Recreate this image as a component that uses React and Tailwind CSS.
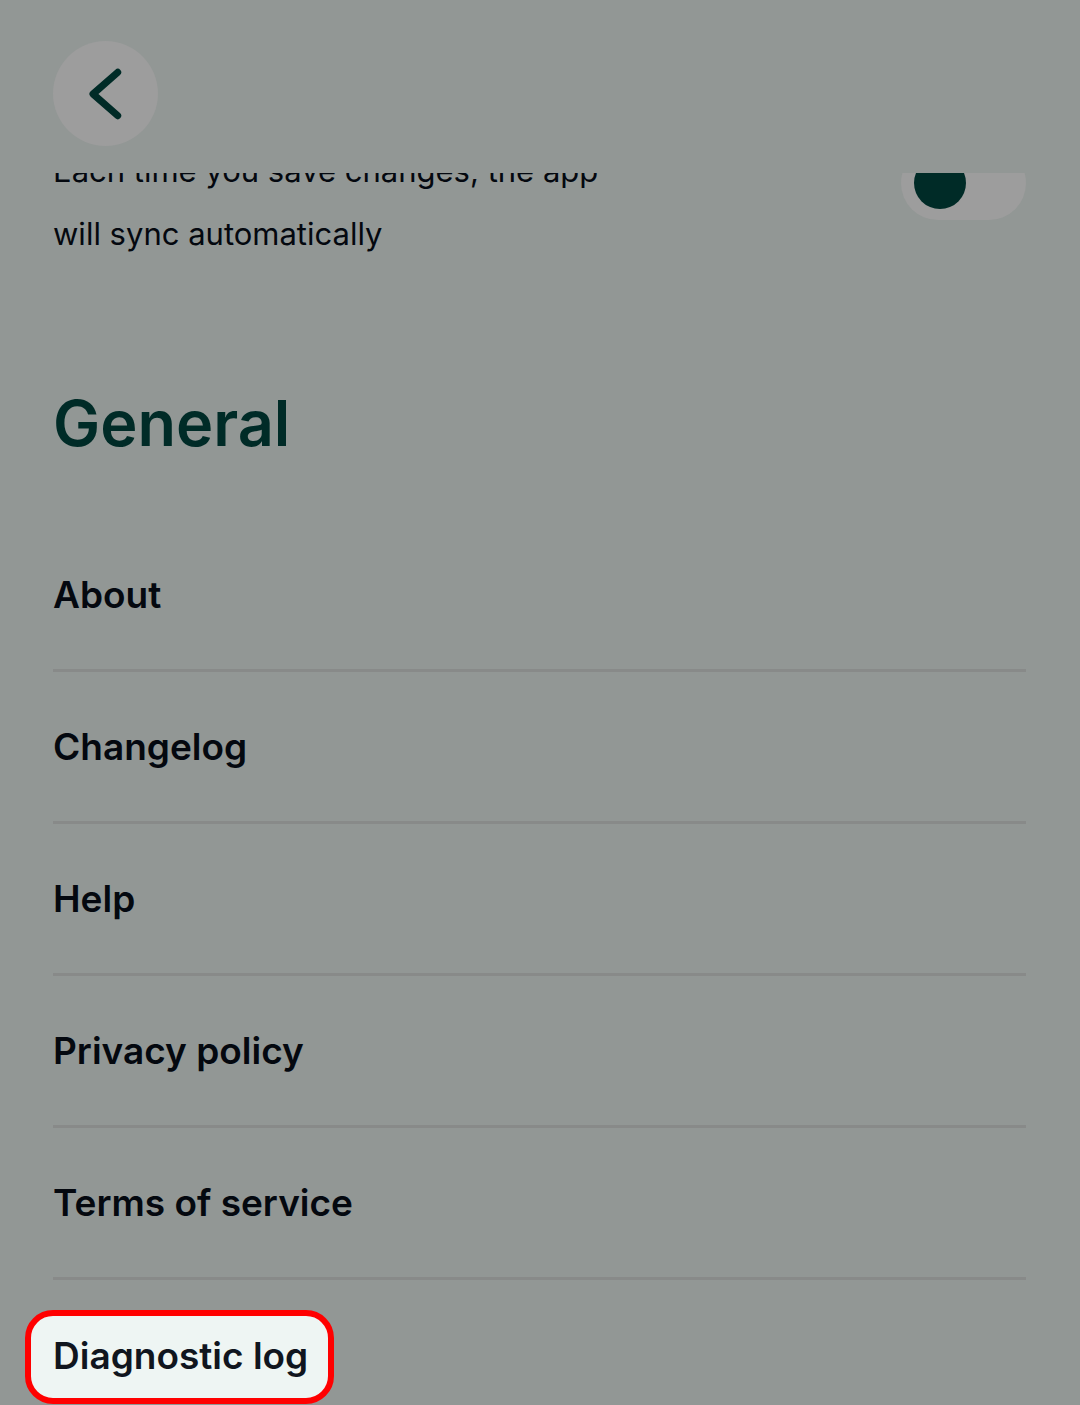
import React from 'react'

const links = ["About", "Changelog", "Help", "Privacy policy", "Terms of service"]

const BackButton = () => {
    return (
        <button type="button" aria-label="Back" className="flex items-center justify-center w-[105px] h-[105px] rounded-full bg-[#9d9d9d] text-[#002b27]">
            <svg aria-hidden="true" className="w-[105px] h-[105px]" fill="none" stroke="currentColor" strokeWidth="7" strokeLinecap="round" strokeLinejoin="round" viewBox="0 0 105 105"><path d="M64.7 31.3 40 53 64.7 74.7"></path></svg>
        </button>
    )
}

const SyncSetting = () => {
    return (
        <div className="flex items-start justify-between">
            <label htmlFor="auto-sync" className="max-w-[580px] text-[31px] leading-[63px]">
                Each time you save changes, the app will sync automatically
            </label>
            <input
                id="auto-sync"
                type="checkbox"
                className="appearance-none flex items-center shrink-0 mt-[7px] w-[125px] h-[74px] px-[13px] rounded-full bg-[#9d9d9d] before:block before:w-[52px] before:h-[52px] before:rounded-full before:bg-[#002b27] checked:justify-end"
            />
        </div>
    )
}

const MenuItem = (props) => {
    return (
        <li className="flex items-center h-[152px] border-b-3 border-[#888a89]">
            <a href="#" className="text-[37px] leading-[48px] font-semibold">{props.title}</a>
        </li>
    )
}

export default function App() {
    return (
        <div className="flex flex-col h-screen overflow-hidden bg-[#929795] text-[#04080f] font-['Inter',sans-serif]">
            <header className="shrink-0 px-[53px] pt-[41px] pb-[27px]">
                <BackButton />
            </header>
            <main className="flex-1 min-h-0 overflow-hidden pl-[53px] pr-[54px]">
                {/* content is scrolled partly under the header */}
                <div className="-mt-[34px]">
                    <SyncSetting />
                    <h2 className="mt-[118px] mb-[57px] text-[63px] leading-[80px] font-semibold text-[#002b27]">General</h2>
                    <ul>
                        {links.map(item => <MenuItem key={item} title={item} />)}
                        <li className="flex items-center h-[154px]">
                            <a href="#" className="-ml-7 pl-[22px] pr-5 pt-4 pb-[18px] border-[6px] border-[#ff0000] rounded-[28px] bg-[#eef5f3] text-[#10151e] text-[37px] leading-[48px] font-semibold">Diagnostic log</a>
                        </li>
                    </ul>
                </div>
            </main>
        </div>
    )
}
